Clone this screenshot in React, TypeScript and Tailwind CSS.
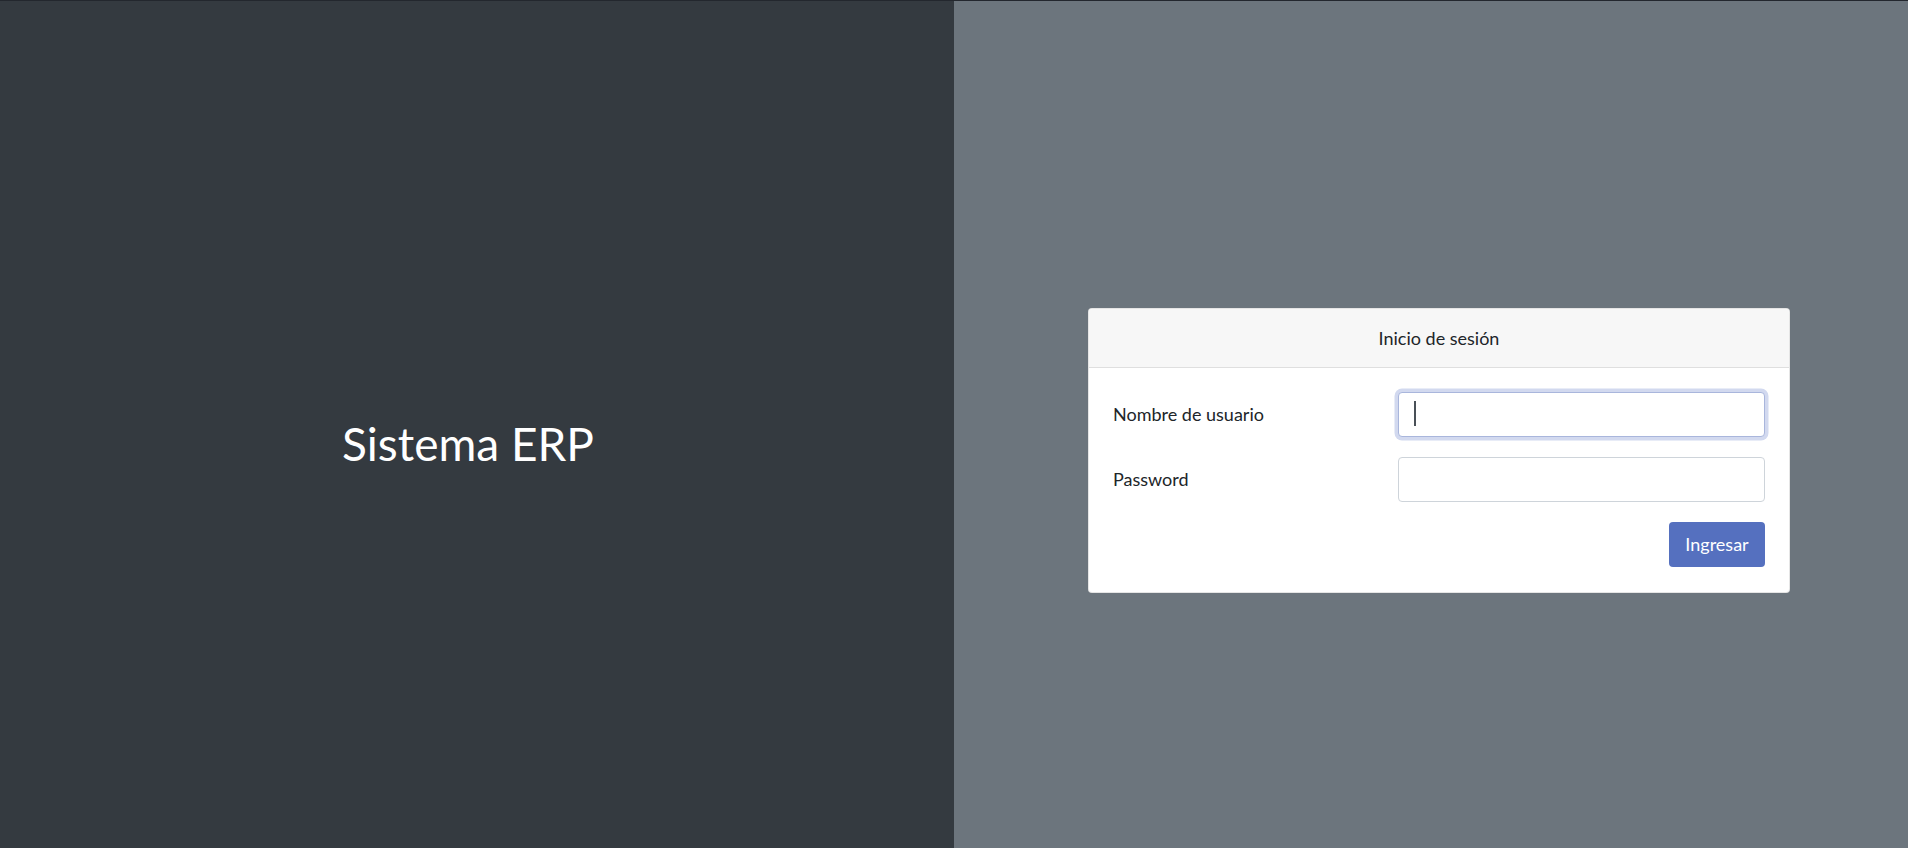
export default function App() {
  return (
    <div className="flex h-screen w-full border-t border-[#23272e] font-['Lato','Noto_Sans',sans-serif] text-[18px] text-[#212529]">
      {/* Brand side */}
      <div className="flex w-1/2 items-center justify-center bg-[#343a40] pt-[38px] pr-[18px]">
        <h1 className="text-[46px] font-normal leading-none text-white">Sistema ERP</h1>
      </div>

      {/* Login side */}
      <div className="flex flex-1 items-center justify-center bg-[#6c757d] pt-[52px] pl-[16px]">
        <div className="w-[702px] rounded-[4px] border border-black/10 bg-white">
          <div className="flex h-[59px] items-center justify-center rounded-t-[4px] border-b border-[#dfdfdf] bg-[#f7f7f7]">
            <span className="text-[18px]">Inicio de sesión</span>
          </div>

          <div className="flex flex-col gap-[20px] px-[24px] pt-[24px] pb-[25px]">
            <div className="flex items-center">
              <label className="w-[285px] shrink-0">Nombre de usuario</label>
              <div className="relative flex-1">
                <input
                  type="text"
                  className="h-[45px] w-full rounded-[4px] border border-[#a9b6dc] bg-white px-3 shadow-[0_0_0_3.5px_#d2d9ef] outline-none"
                />
                <span className="absolute left-[16px] top-[9px] h-[25px] w-[2px] bg-[#495057]" />
              </div>
            </div>

            <div className="flex items-center">
              <label className="w-[285px] shrink-0">Password</label>
              <input
                type="password"
                className="h-[45px] flex-1 rounded-[4px] border border-[#ced4da] bg-white px-3 outline-none"
              />
            </div>

            <div className="flex justify-end">
              <button
                type="button"
                className="h-[45px] w-[96px] rounded-[4px] bg-[#5570bf] text-[18px] text-white"
              >
                Ingresar
              </button>
            </div>
          </div>
        </div>
      </div>
    </div>
  )
}
